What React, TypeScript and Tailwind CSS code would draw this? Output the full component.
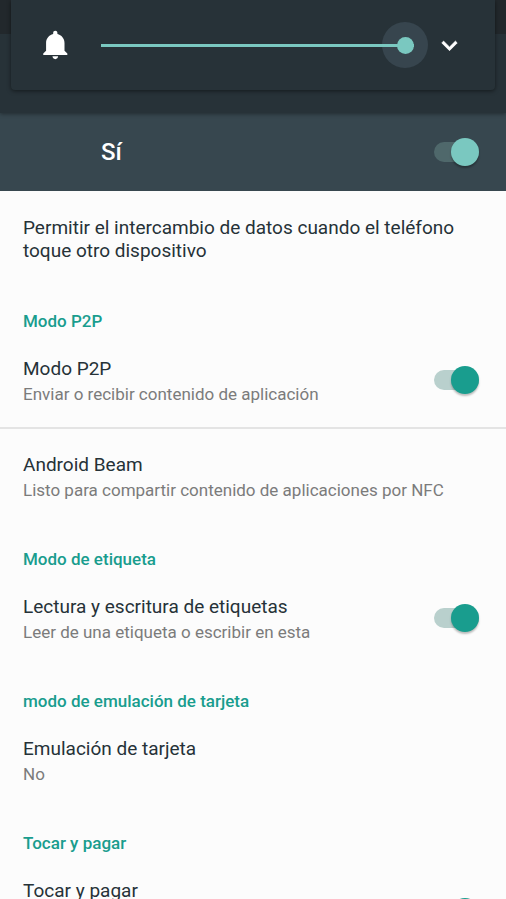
import React, { useState } from 'react';

interface SwitchProps {
  label: string;
  checked: boolean;
  onChange: (checked: boolean) => void;
  dark?: boolean;
}

const Switch: React.FC<SwitchProps> = ({ label, checked, onChange, dark }) => (
  <label className="relative flex h-7 w-[45px] shrink-0 cursor-pointer items-center">
    <input
      type="checkbox"
      role="switch"
      aria-label={label}
      checked={checked}
      onChange={(e) => onChange(e.target.checked)}
      className="peer absolute inset-0 h-full w-full cursor-pointer appearance-none"
    />
    <span
      className={
        dark
          ? 'h-5 w-full rounded-full bg-[#4f686b]'
          : 'h-5 w-full rounded-full bg-[#b9d0cd]'
      }
    />
    <span
      className={
        dark
          ? 'absolute left-0 size-7 rounded-full bg-[#7ac8c0] shadow-[0_2px_2px_rgba(0,0,0,0.3)] peer-checked:left-auto peer-checked:right-0'
          : 'absolute left-0 size-7 rounded-full bg-[#199d8e] shadow-[0_2px_2px_rgba(0,0,0,0.25)] peer-checked:left-auto peer-checked:right-0'
      }
    />
  </label>
);

interface PreferenceProps {
  title: string;
  summary?: string;
  tall?: boolean;
  children?: React.ReactNode;
}

const Preference: React.FC<PreferenceProps> = ({ title, summary, tall, children }) => (
  <div className="flex items-center justify-between gap-4 py-[22px] pr-[27px] pl-[23px]">
    <div className={tall ? 'min-h-[70px]' : ''}>
      <h3 className="text-[19px] leading-7 text-[#263238]">{title}</h3>
      {summary && <p className="text-[17px] leading-[22px] text-[#7b7b7b]">{summary}</p>}
    </div>
    {children}
  </div>
);

const Category: React.FC<{ title: string }> = ({ title }) => (
  <h2 className="px-[23px] pt-6 text-[17px] leading-6 font-medium text-[#199d8e]">{title}</h2>
);

const VolumePanel: React.FC = () => {
  const [volume, setVolume] = useState(100);

  return (
    <div className="absolute inset-x-[11px] top-0 flex h-[90px] items-center rounded-b-sm bg-[#273238] pr-[30px] pl-7 shadow-[0_1px_4px_rgba(0,0,0,0.5)]">
      <svg viewBox="0 0 24 24" className="size-[34px] shrink-0 fill-white">
        <path d="M11.5 22c1.1 0 2-.9 2-2h-4c0 1.1.9 2 2 2zm6.5-6v-5.5c0-3.07-2.13-5.64-5-6.32V3.5c0-.83-.67-1.5-1.5-1.5S10 2.67 10 3.5v.68C7.13 4.86 5 7.43 5 10.5V16l-2 2v1h17v-1l-2-2z" />
      </svg>
      <div className="relative ml-7 flex h-[46px] flex-1 items-center">
        <div className="absolute inset-y-0 right-[9px] left-[9px]">
          <div
            className="absolute top-0 size-[46px] -translate-x-1/2 rounded-full bg-[#37454e]"
            style={{ left: `${volume}%` }}
          />
        </div>
        <input
          type="range"
          min={0}
          max={100}
          value={volume}
          onChange={(e) => setVolume(Number(e.target.value))}
          aria-label="Volumen de notificaciones"
          className="relative h-[3px] w-full cursor-pointer appearance-none bg-[#7ac8c0] [&::-webkit-slider-thumb]:size-[17px] [&::-webkit-slider-thumb]:appearance-none [&::-webkit-slider-thumb]:rounded-full [&::-webkit-slider-thumb]:bg-[#7ac8c0]"
        />
      </div>
      <button type="button" aria-label="Más opciones" className="ml-5 shrink-0 cursor-pointer">
        <svg viewBox="0 0 24 24" className="size-[31px] fill-white stroke-white stroke-[0.5]">
          <path d="M16.59 8.59L12 13.17 7.41 8.59 6 10l6 6 6-6z" />
        </svg>
      </button>
    </div>
  );
};

export default function App() {
  const [nfc, setNfc] = useState(true);
  const [p2p, setP2p] = useState(true);
  const [tags, setTags] = useState(true);
  const [tapPay, setTapPay] = useState(true);

  return (
    <div className="flex h-screen flex-col overflow-hidden bg-[#fcfcfc] font-[Roboto,sans-serif]">
      {/* Status bar + toolbar */}
      <header className="relative z-10 shrink-0 bg-[#273238] shadow-[0_1px_4px_rgba(0,0,0,0.4)]">
        <div className="h-[34px] bg-[#22282c]" />
        <div className="h-[79px]" />
        <VolumePanel />
      </header>

      <div className="flex h-[78px] shrink-0 items-center justify-between bg-[#37474f] pr-[27px] pl-[101px]">
        <h1 className="text-[24px] leading-7 font-medium text-white">Sí</h1>
        <Switch label="NFC" checked={nfc} onChange={setNfc} dark />
      </div>

      <main className="min-h-0 flex-1 overflow-y-auto [scrollbar-width:none]">
        <p className="px-[23px] pt-[25px] pb-[23px] text-[19px] leading-[23px] text-[#263238]">
          Permitir el intercambio de datos cuando el teléfono toque otro dispositivo
        </p>

        <Category title="Modo P2P" />
        <div className="border-b-2 border-[#e4e4e4]">
          <Preference title="Modo P2P" summary="Enviar o recibir contenido de aplicación">
            <Switch label="Modo P2P" checked={p2p} onChange={setP2p} />
          </Preference>
        </div>
        <Preference
          title="Android Beam"
          summary="Listo para compartir contenido de aplicaciones por NFC"
        />

        <Category title="Modo de etiqueta" />
        <Preference title="Lectura y escritura de etiquetas" summary="Leer de una etiqueta o escribir en esta">
          <Switch label="Lectura y escritura de etiquetas" checked={tags} onChange={setTags} />
        </Preference>

        <Category title="modo de emulación de tarjeta" />
        <Preference title="Emulación de tarjeta" summary="No" />

        <Category title="Tocar y pagar" />
        <Preference title="Tocar y pagar" tall>
          <Switch label="Tocar y pagar" checked={tapPay} onChange={setTapPay} />
        </Preference>
      </main>
    </div>
  );
}
